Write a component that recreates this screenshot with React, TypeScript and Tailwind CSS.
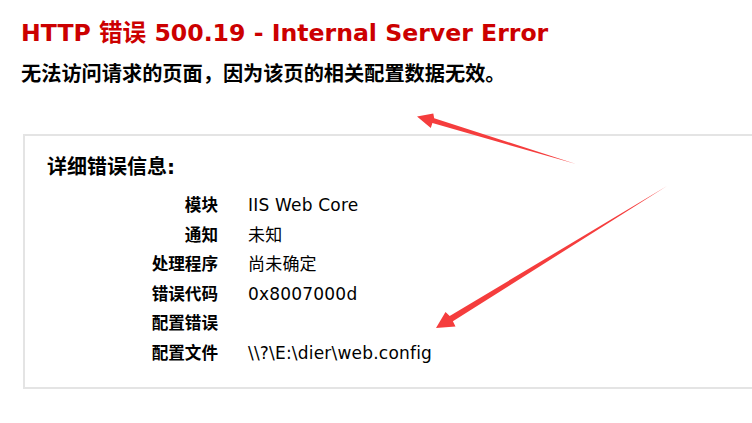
const rows: [string, string][] = [
  ["模块", "IIS Web Core"],
  ["通知", "未知"],
  ["处理程序", "尚未确定"],
  ["错误代码", "0x8007000d"],
  ["配置错误", ""],
  ["配置文件", "\\\\?\\E:\\dier\\web.config"],
];

const sans = "font-['Verdana','DejaVu_Sans','Noto_Sans_CJK_SC',sans-serif]";

export default function App() {
  return (
    <div className={`relative min-h-[423px] w-full overflow-hidden bg-white pl-[21px] pt-[18px] text-black ${sans}`}>
      <h1 className="text-[23.6px] font-bold leading-[30px] text-[#cc0000]">
        HTTP 错误 500.19 - Internal Server Error
      </h1>
      <h2 className="mt-[13px] text-[20.2px] font-bold leading-[27px]">
        无法访问请求的页面，因为该页的相关配置数据无效。
      </h2>

      {/* detail box runs off the right edge */}
      <div className="ml-[2px] mr-[-20px] mt-[46px] border-[2.5px] border-[#e4e4e4] pb-[18px] pl-[22px] pt-[18px]">
        <h3 className="text-[20px] font-bold leading-[27px]">详细错误信息:</h3>
        <div className="mt-[10px] grid grid-cols-[171px_1fr] gap-x-[30px] text-[17px] tracking-[0.2px]">
          {rows.map(([k, v]) => (
            <div key={k} className="contents">
              <div className="h-[29.6px] text-right text-[16.6px] font-bold leading-[29.6px] tracking-normal">{k}</div>
              <div className="h-[29.6px] leading-[29.6px]">{v}</div>
            </div>
          ))}
        </div>
      </div>

      {/* annotation arrows */}
      <svg className="pointer-events-none absolute inset-0" width="752" height="423" viewBox="0 0 752 423">
        <polygon
          fill="#f53d3d"
          points="576,164 434.2,118.2 433.3,113.6 417,116.5 430.8,128 432.4,123.1"
        />
        <polygon
          fill="#f53d3d"
          points="667,186 449.7,316 445.5,312 436,328 455.5,326.5 452.9,321.2"
        />
      </svg>
    </div>
  );
}
